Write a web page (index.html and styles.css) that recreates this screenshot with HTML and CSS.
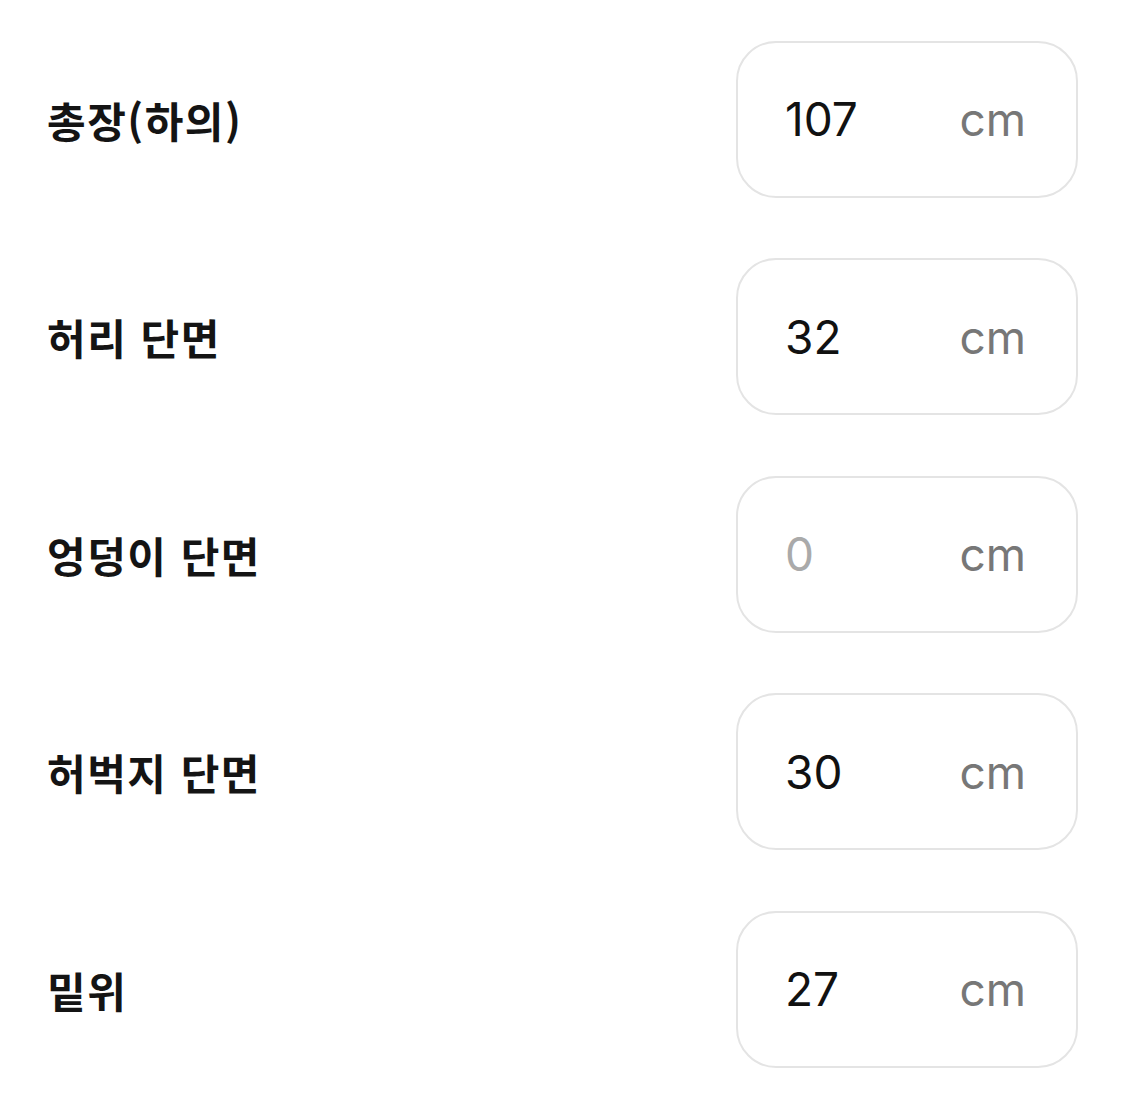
FILE: index.html
```html
<!DOCTYPE html>
<html lang="ko">
<head>
<meta charset="utf-8">
<link rel="stylesheet" href="styles.css">
</head>
<body>
<div class="form">
  <div class="row">
    <div class="label">총장(하의)</div>
    <div class="field"><span class="value">107</span><span class="unit">cm</span></div>
  </div>
  <div class="row">
    <div class="label">허리 단면</div>
    <div class="field"><span class="value">32</span><span class="unit">cm</span></div>
  </div>
  <div class="row">
    <div class="label">엉덩이 단면</div>
    <div class="field"><span class="value placeholder">0</span><span class="unit">cm</span></div>
  </div>
  <div class="row">
    <div class="label">허벅지 단면</div>
    <div class="field"><span class="value">30</span><span class="unit">cm</span></div>
  </div>
  <div class="row">
    <div class="label">밑위</div>
    <div class="field"><span class="value">27</span><span class="unit">cm</span></div>
  </div>
</div>
</body>
</html>
```
FILE: styles.css
```css
html, body {
  margin: 0;
  padding: 0;
  background: #ffffff;
}
.form {
  display: flex;
  flex-direction: column;
  gap: 60.5px;
  padding: 40.5px 47px 0 47px;
}
.row {
  display: flex;
  align-items: center;
  justify-content: space-between;
}
.label {
  font-family: "Noto Sans CJK KR", "Noto Sans", sans-serif;
  font-weight: 700;
  font-size: 42px;
  color: #141414;
  letter-spacing: 1.5px;
}
.field {
  box-sizing: border-box;
  width: 342px;
  height: 157px;
  border: 2px solid #e4e4e4;
  border-radius: 40px;
  display: flex;
  align-items: center;
  justify-content: space-between;
  padding: 0 50px 0 47px;
  font-family: Inter, "Liberation Sans", sans-serif;
  font-size: 46px;
}
.value {
  color: #111111;
}
.value.placeholder {
  color: #aaaaaa;
}
.unit {
  color: #777777;
}
```
